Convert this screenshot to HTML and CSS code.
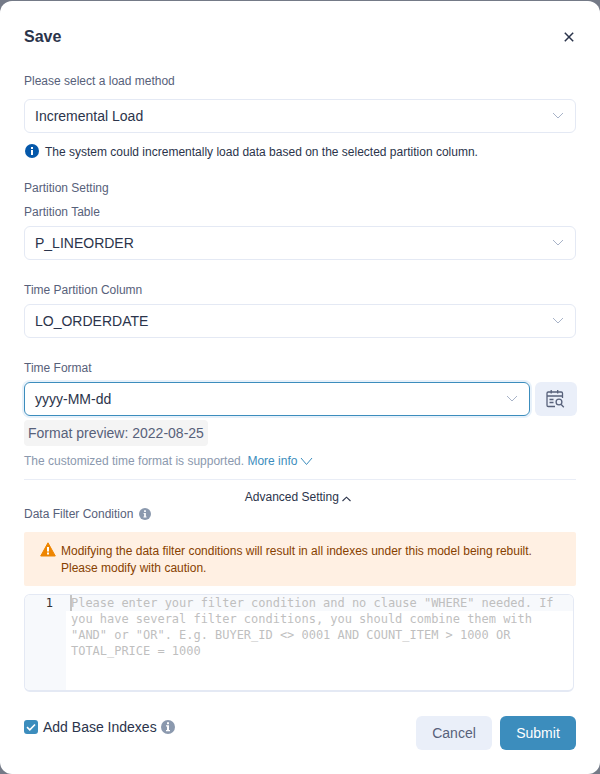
FILE: index.html
```html
<!DOCTYPE html>
<html lang="en">
<head>
<meta charset="utf-8">
<title>Save</title>
<link rel="stylesheet" href="styles.css">
</head>
<body>
<main class="dialog">
  <header class="header">
    <h1 class="title">Save</h1>
    <svg class="close" width="10" height="10" viewBox="0 0 10 10"><path d="M.8.8l8.4 8.4M9.2.8L.8 9.2"/></svg>
  </header>

  <div class="label first">Please select a load method</div>
  <div class="select"><span>Incremental Load</span><svg class="arrow" width="12" height="8" viewBox="0 0 12 8"><path d="M1 1l5 5 5-5"/></svg></div>
  <div class="note">
    <svg width="14" height="14" viewBox="0 0 14 14"><circle cx="7" cy="7" r="7" fill="#0558aa"/><path d="M6 3h2v2H6zM6 6h2v5H6z" fill="#fff"/></svg>
    <span>The system could incrementally load data based on the selected partition column.</span>
  </div>

  <div class="label section">Partition Setting</div>
  <div class="label table-label">Partition Table</div>
  <div class="select"><span>P_LINEORDER</span><svg class="arrow" width="12" height="8" viewBox="0 0 12 8"><path d="M1 1l5 5 5-5"/></svg></div>

  <div class="label field">Time Partition Column</div>
  <div class="select"><span>LO_ORDERDATE</span><svg class="arrow" width="12" height="8" viewBox="0 0 12 8"><path d="M1 1l5 5 5-5"/></svg></div>

  <div class="label field">Time Format</div>
  <div class="format-row">
    <div class="select focused"><span>yyyy-MM-dd</span><svg class="arrow" width="12" height="8" viewBox="0 0 12 8"><path d="M1 1l5 5 5-5"/></svg></div>
    <div class="detect">
      <svg width="20" height="20" viewBox="0 0 20 20"><path d="M17.500 9V4.200q0-1.200-1.200-1.200H3.200Q2 3 2 4.200V16.300q0 1.200 1.200 1.200H10M2 7h15.500M6.200 1v3.500M12.700 1v3.500M4.500 10.500H8.500M4.500 13.500H8.500"/><circle cx="14" cy="13" r="2.900"/><path d="M16.200 15.500l2.600 2.700"/></svg>
    </div>
  </div>
  <div class="preview">Format preview: 2022-08-25</div>
  <div class="hint">The customized time format is supported. <span class="link">More info<svg width="13" height="9" viewBox="0 0 13 9"><path d="M1 1l5.500 6.500L12 1"/></svg></span></div>

  <div class="advanced">Advanced Setting <svg width="9" height="6" viewBox="0 0 9 6"><path d="M.5 5L4.500 1.200l4 3.800"/></svg></div>
  <div class="label condition">Data Filter Condition
    <svg width="12" height="12" viewBox="0 0 14 14"><circle cx="7" cy="7" r="7" fill="#8b99ae"/><path d="M6 2.700h2v2H6zM5.200 5.700H8v4.200h.8V11H5.200V9.900H6V6.800h-.8z" fill="#fff"/></svg>
  </div>

  <div class="alert">
    <svg width="16" height="15" viewBox="0 0 16 15"><path d="M8 .8L15.300 14H.7z" fill="#ee8500" stroke="#ee8500" stroke-linejoin="round"/><path d="M7 5h2v4.500H7zM7 10.500h2v2H7z" fill="#fff"/></svg>
    <p>Modifying the data filter conditions will result in all indexes under this model being rebuilt. Please modify with caution.</p>
  </div>

  <div class="editor">
    <div class="gutter"><div class="line-number">1</div></div>
    <div class="code">Please enter your filter condition and no clause "WHERE" needed. If<br>you have several filter conditions, you should combine them with<br>"AND" or "OR". E.g. BUYER_ID &lt;&gt; 0001 AND COUNT_ITEM &gt; 1000 OR<br>TOTAL_PRICE = 1000</div>
  </div>

  <footer class="footer">
    <div class="base-index">
      <span class="checkbox"><svg width="14" height="14" viewBox="0 0 14 14"><path d="M3 7.200l2.800 2.600 5.200-5.300"/></svg></span>
      <span>Add Base Indexes</span>
      <svg class="info" width="14" height="14" viewBox="0 0 14 14"><circle cx="7" cy="7" r="7" fill="#8b99ae"/><path d="M6 2.200h2v2H6zM5 5.200h3v4.800h1V11.200H5V10h1V6.400H5z" fill="#fff"/></svg>
    </div>
    <div class="actions">
      <button class="button">Cancel</button>
      <button class="button primary">Submit</button>
    </div>
  </footer>
</main>
</body>
</html>
```
FILE: styles.css
```css
* { box-sizing: border-box; }
body {
  margin: 0;
  padding-top: 1px;
  background: #747a87;
  font-family: "Liberation Sans", Arial, sans-serif;
  font-size: 12px;
  color: #2b344b;
}
svg { flex: none; fill: none; }
.dialog {
  height: 773px;
  padding: 24px 24px 0;
  background: #fff;
  border-radius: 12px;
}
.header {
  display: flex;
  align-items: center;
  justify-content: space-between;
  height: 24px;
  padding-right: 2px;
}
.title { margin: 0; font-size: 16px; line-height: 24px; }
.close { stroke: #2b344b; stroke-width: 1.5; }
.label { line-height: 18px; color: #57617a; }
.first { margin: 23px 0 9px; }
.select {
  display: flex;
  align-items: center;
  justify-content: space-between;
  height: 34px;
  padding: 0 11px 0 10px;
  border: 1px solid #e4e9f4;
  border-radius: 6px;
  font-size: 14px;
}
.arrow { stroke: #a8b3c8; }
.note {
  display: flex;
  align-items: flex-start;
  gap: 6px;
  height: 18px;
  margin-top: 10px;
  padding-left: 1px;
  line-height: 18px;
}
.note svg { margin-top: 1px; }
.section { margin-top: 18px; }
.table-label { margin: 6px 0 5px; }
.field { margin: 21px 0 5px; }
.format-row { display: flex; gap: 5px; margin-right: -1px; }
.focused {
  flex: 1;
  border-color: #3c8dbd;
  box-shadow: 0 0 0 2px #e7f1fa;
}
.detect {
  display: flex;
  align-items: center;
  justify-content: center;
  width: 42px;
  height: 34px;
  border-radius: 6px;
  background: #eaeff9;
}
.detect svg { margin-right: 2px; stroke: #57617a; stroke-width: 1.3; }
.preview {
  width: max-content;
  margin-top: 4px;
  padding: 0 4px;
  border-radius: 4px;
  background: #f4f4f4;
  color: #57617a;
  font-size: 14px;
  line-height: 26px;
}
.hint {
  margin-top: 6px;
  line-height: 18px;
  color: #8b99ae;
}
.link { color: #3c8dbd; }
.link svg { margin-left: 3px; vertical-align: -1px; stroke: #3c8dbd; }
.advanced {
  margin-top: 9px;
  padding: 8px 4px 0 0;
  border-top: 1px solid #e9edf6;
  line-height: 18px;
  text-align: center;
}
.advanced svg { vertical-align: -1px; stroke: #2b344b; stroke-width: 1.1; }
.condition {
  display: flex;
  align-items: center;
  gap: 6px;
  margin-top: -1px;
}
.alert {
  display: flex;
  gap: 5px;
  height: 54px;
  margin-top: 9px;
  padding: 10px 16px;
  border-radius: 2px;
  background: #fff0e3;
  color: #874100;
}
.alert p { margin: 1px 0 0; line-height: 17px; }
.editor {
  display: flex;
  width: 550px;
  height: 98px;
  margin-top: 8px;
  overflow: hidden;
  border: 1px solid #e4e9f4;
  border-bottom-width: 2px;
  border-radius: 6px;
  font: 12px/16px "DejaVu Sans Mono", monospace;
  letter-spacing: -.022px;
}
.gutter { width: 41px; background: #f7f9fc; }
.line-number { padding: 0 13px; text-align: right; color: #333; }
.code {
  flex: 1;
  padding-left: 5px;
  background: linear-gradient(#c4c4c4, #c4c4c4) 4px 0 / 2px 16px no-repeat,
    linear-gradient(#f7f9fc, #f7f9fc) 0 0 / 100% 16px no-repeat;
  color: #bfbfbf;
  white-space: nowrap;
}
.footer {
  display: flex;
  justify-content: space-between;
  margin-top: 24px;
}
.base-index {
  display: flex;
  align-items: center;
  height: 22px;
  font-size: 14px;
}
.checkbox {
  height: 14px;
  margin-right: 5px;
  border-radius: 3px;
  background: #3c8dbd;
}
.checkbox svg { display: block; stroke: #fff; stroke-width: 1.6; }
.info { margin-left: 4px; }
.actions { display: flex; gap: 8px; }
.button {
  width: 76px;
  height: 34px;
  padding: 0;
  border: 0;
  border-radius: 6px;
  background: #eaeff9;
  color: #57617a;
  font: 14px "Liberation Sans", Arial, sans-serif;
}
.primary { background: #3c8dbd; color: #fff; }
```
